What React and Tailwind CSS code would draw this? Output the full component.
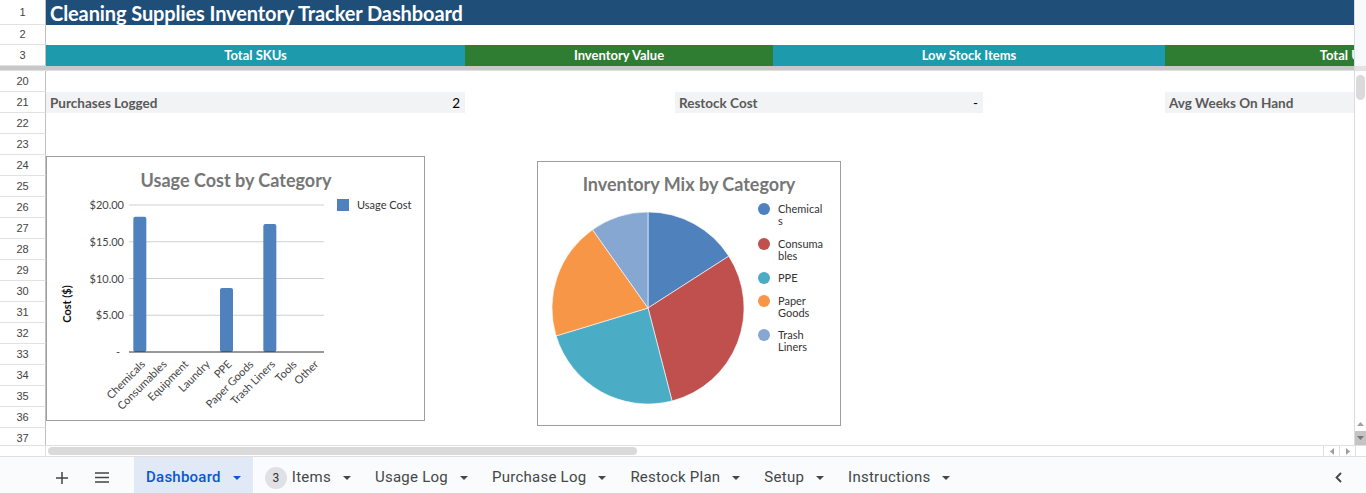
const rowNums = [20, 21, 22, 23, 24, 25, 26, 27, 28, 29, 30, 31, 32, 33, 34, 35, 36, 37];

const cats = ["Chemicals", "Consumables", "Equipment", "Laundry", "PPE", "Paper Goods", "Trash Liners", "Tools", "Other"];
const vals = [18.4, 0, 0, 0, 8.7, 0, 17.4, 0, 0];

const slices = [
  { name: ["Chemical", "s"], from: 0, to: 57.3, color: "#4f81bd", ly: 47 },
  { name: ["Consuma", "bles"], from: 57.3, to: 165.5, color: "#c0504d", ly: 82 },
  { name: ["PPE"], from: 165.5, to: 253.1, color: "#4bacc6", ly: 116 },
  { name: ["Paper", "Goods"], from: 253.1, to: 324.7, color: "#f79646", ly: 139 },
  { name: ["Trash", "Liners"], from: 324.7, to: 360, color: "#87a7d3", ly: 173 },
];

function pt(cx, cy, r, deg) {
  const a = (deg * Math.PI) / 180;
  return [cx + r * Math.sin(a), cy - r * Math.cos(a)];
}

function slicePath(cx, cy, r, from, to) {
  const [x1, y1] = pt(cx, cy, r, from);
  const [x2, y2] = pt(cx, cy, r, to - 0.001);
  const large = to - from > 180 ? 1 : 0;
  return `M${cx},${cy} L${x1},${y1} A${r},${r} 0 ${large} 1 ${x2},${y2} Z`;
}

function Caret({ className }) {
  return (
    <svg width="8" height="4" viewBox="0 0 8 4" className={className}>
      <path d="M0 0h8L4 4z" fill="currentColor" />
    </svg>
  );
}

function RowHead({ n, h }) {
  return (
    <div
      className={`${h} w-[46px] shrink-0 border-r border-b border-r-[#c0c0c0] border-b-[#e2e2e2] bg-white flex items-center justify-center text-[11px] font-normal text-[#444] font-['Liberation_Sans',sans-serif]`}
    >
      {n}
    </div>
  );
}

function UsageChart() {
  const x0 = 82;
  const step = 195 / 9;
  const base = 195;
  const scale = 147 / 20;
  return (
    <div className="absolute left-[46px] top-[156px] w-[379px] h-[265px] bg-white border border-[#9e9e9e]">
      <svg width="377" height="263" className="font-['Lato',sans-serif]">
        <text x="189" y="30" textAnchor="middle" fontSize="18" fontWeight="700" fill="#767676">
          Usage Cost by Category
        </text>
        {[20, 15, 10, 5].map((v) => (
          <g key={v}>
            <line x1={x0} x2={277} y1={base - v * scale} y2={base - v * scale} stroke="#cfcfcf" strokeWidth="1" />
            <text x="77" y={base - v * scale + 4} textAnchor="end" fontSize="11" fill="#444">
              ${v}.00
            </text>
          </g>
        ))}
        <text x="73" y={base + 4} textAnchor="end" fontSize="11" fill="#444">
          -
        </text>
        {vals.map((v, i) =>
          v > 0 ? (
            <rect
              key={i}
              x={x0 + (i + 0.5) * step - 6.5}
              y={base - v * scale}
              width="13"
              height={v * scale}
              rx="2"
              fill="#4f81bd"
            />
          ) : null
        )}
        <line x1={x0} x2={277} y1={base} y2={base} stroke="#333" strokeWidth="1" />
        {cats.map((c, i) => {
          const cx = x0 + (i + 0.5) * step + 6;
          const cy = base + 13;
          return (
            <text key={c} x={cx} y={cy} textAnchor="end" fontSize="11" fill="#444" transform={`rotate(-45 ${cx} ${cy})`}>
              {c}
            </text>
          );
        })}
        <text x="24" y="147" textAnchor="middle" fontSize="11" fontWeight="700" fill="#111" transform="rotate(-90 24 147)">
          Cost ($)
        </text>
        <rect x="290" y="42" width="12" height="12" fill="#4f81bd" />
        <text x="310" y="52" fontSize="11" fill="#333">
          Usage Cost
        </text>
      </svg>
    </div>
  );
}

function MixChart() {
  const cx = 110;
  const cy = 146;
  const r = 96;
  return (
    <div className="absolute left-[537px] top-[161px] w-[304px] h-[265px] bg-white border border-[#9e9e9e]">
      <svg width="302" height="263" className="font-['Lato',sans-serif]">
        <text x="151" y="29" textAnchor="middle" fontSize="18" fontWeight="700" fill="#767676">
          Inventory Mix by Category
        </text>
        {slices.map((s) => (
          <path key={s.color} d={slicePath(cx, cy, r, s.from, s.to)} fill={s.color} stroke="#fff" strokeWidth="0.6" />
        ))}
        {slices.map((s) => (
          <g key={s.name[0]}>
            <circle cx="226" cy={s.ly} r="6" fill={s.color} />
            {s.name.map((t, j) => (
              <text key={t} x="240" y={s.ly + 4 + j * 12} fontSize="11" fill="#333">
                {t}
              </text>
            ))}
          </g>
        ))}
      </svg>
    </div>
  );
}

function Grid() {
  return (
    <div className="relative flex-1 h-[445px] overflow-hidden bg-white">
      <div className="flex h-[25px]">
        <RowHead n={1} h="h-[25px]" />
        <div className="flex-1 bg-[#1f4e79] flex items-center pl-1 text-white font-bold text-[20px] font-['Lato',sans-serif] tracking-[-0.1px] whitespace-nowrap">
          Cleaning Supplies Inventory Tracker Dashboard
        </div>
      </div>
      <div className="flex h-[20px]">
        <RowHead n={2} h="h-[20px]" />
        <div className="flex-1" />
      </div>
      <div className="flex h-[21px]">
        <RowHead n={3} h="h-[21px]" />
        <div className="flex flex-1 overflow-hidden text-white font-bold text-[13px] font-['Lato',sans-serif] whitespace-nowrap">
          <div className="w-[419px] shrink-0 bg-[#1d9aab] flex items-center justify-center pt-[1px]">Total SKUs</div>
          <div className="w-[308px] shrink-0 bg-[#2e7d32] flex items-center justify-center pt-[1px]">Inventory Value</div>
          <div className="w-[392px] shrink-0 bg-[#1d9aab] flex items-center justify-center pt-[1px]">Low Stock Items</div>
          <div className="w-[406px] shrink-0 bg-[#2e7d32] flex items-center justify-center pt-[1px]">Total Usage Cost</div>
        </div>
      </div>
      <div className="h-[5px] bg-[#c8c8c8] border-b border-[#e0e0e0]" />
      {rowNums.map((n) => (
        <div key={n} className="flex h-[21px]">
          <RowHead n={n} h="h-[21px]" />
          {n === 21 ? (
            <div className="flex flex-1 items-stretch text-[13.5px] leading-[13px] font-['Lato',sans-serif] whitespace-nowrap overflow-hidden">
              <div className="w-[419px] shrink-0 bg-[#f2f3f5] flex items-end pb-[3px] justify-between pl-1 pr-[5px]">
                <span className="font-bold text-[#595959]">Purchases Logged</span>
                <span className="text-black">2</span>
              </div>
              <div className="w-[210px] shrink-0" />
              <div className="w-[308px] shrink-0 bg-[#f2f3f5] flex items-end pb-[3px] justify-between pl-1 pr-[5px]">
                <span className="font-bold text-[#595959]">Restock Cost</span>
                <span className="text-black">-</span>
              </div>
              <div className="w-[182px] shrink-0" />
              <div className="flex-1 bg-[#f2f3f5] flex items-end pb-[3px] pl-1">
                <span className="font-bold text-[#595959]">Avg Weeks On Hand</span>
              </div>
            </div>
          ) : (
            <div className="flex-1" />
          )}
        </div>
      ))}
      <UsageChart />
      <MixChart />
    </div>
  );
}

function VScroll() {
  return (
    <div className="w-[12px] h-[445px] flex flex-col border-l border-[#dadce0] bg-white">
      <div className="h-[66px] bg-[#f8f9fa]" />
      <div className="h-[5px] bg-[#e3e3e3]" />
      <div className="flex-1 relative">
        <div className="absolute left-[1px] right-[1px] top-[4px] h-[25px] rounded-full bg-[#dadada]" />
      </div>
      <div className="h-[14px] flex items-center justify-center text-[#a0a0a0]">
        <svg width="7" height="4" viewBox="0 0 7 4">
          <path d="M0 4h7L3.5 0z" fill="currentColor" />
        </svg>
      </div>
      <div className="h-[14px] bg-[#c4c4c4] flex items-center justify-center text-[#777]">
        <svg width="7" height="4" viewBox="0 0 7 4">
          <path d="M0 0h7L3.5 4z" fill="currentColor" />
        </svg>
      </div>
    </div>
  );
}

function HScroll() {
  return (
    <div className="h-[12px] flex border-t border-b border-[#e0e0e0] bg-white">
      <div className="w-[46px] border-r border-[#e0e0e0]" />
      <div className="flex-1 relative">
        <div className="absolute left-[2px] top-[1px] w-[589px] h-[8px] rounded-full bg-[#dadada]" />
      </div>
      <div className="w-[16px] border-l border-[#e0e0e0] flex items-center justify-center">
        <svg width="4" height="7" viewBox="0 0 4 7">
          <path d="M4 0v7L0 3.5z" fill="#9e9e9e" />
        </svg>
      </div>
      <div className="w-[16px] border-l border-[#e0e0e0] flex items-center justify-center">
        <svg width="4" height="7" viewBox="0 0 4 7">
          <path d="M0 0v7L4 3.5z" fill="#9e9e9e" />
        </svg>
      </div>
      <div className="w-[11px] border-l border-[#e0e0e0]" />
    </div>
  );
}

function Tab({ label, active, badge }) {
  return (
    <div
      className={`h-full flex items-center pt-[5px] px-3 gap-3 ${active ? "bg-[#e1e9f7] text-[#0b57d0] font-medium" : "text-[#444746]"}`}
    >
      <div className="flex items-center gap-[5px]">
        {badge && (
          <span className="w-[22px] h-[22px] rounded-full bg-[#dfe1e5] text-[#333] text-[12px] tracking-normal flex items-center justify-center">
            {badge}
          </span>
        )}
        <span>{label}</span>
      </div>
      <Caret />
    </div>
  );
}

function TabBar() {
  return (
    <div className="h-[36px] flex items-center bg-[#f9fbfd] text-[15px] tracking-[0.25px] font-['Roboto',sans-serif]">
      <div className="w-[124px] h-full flex items-center pt-[5px]">
        <svg width="12" height="12" viewBox="0 0 12 12" className="ml-[56px]">
          <path d="M6 0v12M0 6h12" stroke="#444" strokeWidth="1.5" />
        </svg>
        <svg width="14" height="11" viewBox="0 0 14 11" className="ml-[27px]">
          <path d="M0 1h14M0 5.5h14M0 10h14" stroke="#444" strokeWidth="1.5" />
        </svg>
      </div>
      <div className="w-[10px]" />
      <Tab label="Dashboard" active />
      <Tab label="Items" badge="3" />
      <Tab label="Usage Log" />
      <Tab label="Purchase Log" />
      <Tab label="Restock Plan" />
      <Tab label="Setup" />
      <Tab label="Instructions" />
      <div className="flex-1" />
      <svg width="7" height="11" viewBox="0 0 7 11" className="mr-[24px] mt-[5px]">
        <path d="M6 1L1.5 5.5 6 10" stroke="#444" strokeWidth="1.8" fill="none" />
      </svg>
    </div>
  );
}

export default function App() {
  return (
    <div className="w-[1366px] h-[493px] flex flex-col overflow-hidden bg-white">
      <div className="flex h-[445px]">
        <Grid />
        <VScroll />
      </div>
      <HScroll />
      <TabBar />
    </div>
  );
}
